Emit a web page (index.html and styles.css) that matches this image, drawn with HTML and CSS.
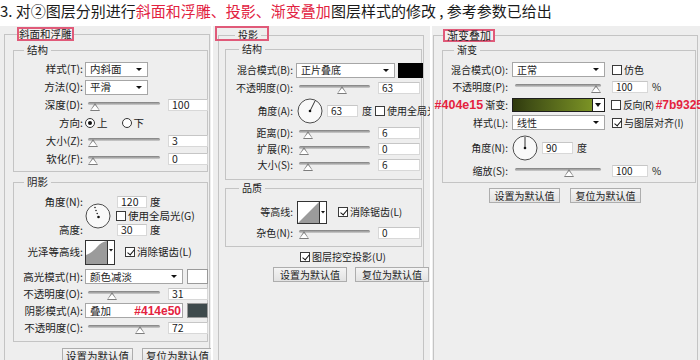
FILE: index.html
```html
<!DOCTYPE html>
<html lang="zh-CN">

<head>
    <meta charset="UTF-8">
    <title>图层样式参数</title>
    <link rel="stylesheet" href="styles.css">
</head>

<body>
    <div class="page">
        <div class="headline">3. 对②图层分别进行<span class="hl">斜面和浮雕、投影、渐变叠加</span>图层样式的修改 , 参考参数已给出</div>

        <div class="panels">
            <!-- 斜面和浮雕 -->
            <div class="panel p-bevel">
                <fieldset class="frame">
                    <legend class="mark">斜面和浮雕</legend>
                    <fieldset class="group g-struct">
                        <legend>结构</legend>
                        <div class="row"><span class="lbl">样式(T):</span><span class="select sm">内斜面</span></div>
                        <div class="row"><span class="lbl">方法(Q):</span><span class="select sm">平滑</span></div>
                        <div class="row">
                            <span class="lbl">深度(D):</span>
                            <span class="slider"><i class="track"></i><span class="rail"><i class="thumb" style="left:4%"></i></span></span>
                            <span class="val">100</span>
                        </div>
                        <div class="row">
                            <span class="lbl">方向:</span>
                            <span class="radio on"></span><span class="opt">上</span>
                            <span class="radio"></span><span>下</span>
                        </div>
                        <div class="row">
                            <span class="lbl">大小(Z):</span>
                            <span class="slider"><i class="track"></i><span class="rail"><i class="thumb" style="left:0%"></i></span></span>
                            <span class="val">3</span>
                        </div>
                        <div class="row">
                            <span class="lbl">软化(F):</span>
                            <span class="slider"><i class="track"></i><span class="rail"><i class="thumb" style="left:0%"></i></span></span>
                            <span class="val">0</span>
                        </div>
                    </fieldset>

                    <fieldset class="group g-shade">
                        <legend>阴影</legend>
                        <div class="angle-grid">
                            <span class="lbl top">角度(N):</span>
                            <svg class="dial" width="26" height="26" viewBox="0 0 26 26">
                                <circle cx="13" cy="13" r="12" fill="#f9f9f9" stroke="#4d4d4d" />
                                <g fill="#222">
                                    <circle cx="10" cy="4.5" r=".8" />
                                    <circle cx="11" cy="7.5" r=".8" />
                                    <circle cx="12.2" cy="10.5" r=".8" />
                                </g>
                                <circle cx="13.5" cy="14" r="1.3" fill="#111" />
                            </svg>
                            <div class="sub r1"><span class="val short">120</span><span class="unit">度</span></div>
                            <div class="sub r2"><span class="chk"></span>使用全局光(G)</div>
                            <span class="lbl bottom">高度:</span>
                            <div class="sub r3"><span class="val short">30</span><span class="unit">度</span></div>
                        </div>
                        <div class="row contour-row">
                            <span class="lbl">光泽等高线:</span>
                            <svg class="contour" width="30" height="25" viewBox="0 0 30 25">
                                <rect x=".5" y=".5" width="29" height="24" fill="#fff" stroke="#333" />
                                <path d="M1 24V15Q8 12 12 7T22 1V24Z" fill="#9b9b9b" />
                                <path d="M22.5 .5V24.5" stroke="#333" />
                                <path d="M24 9h4l-2 2.5z" fill="#111" />
                            </svg>
                            <span class="chk on"></span>消除锯齿(L)
                        </div>
                        <div class="row first"><span class="lbl">高光模式(H):</span><span class="select lg">颜色减淡</span><span class="swatch white"></span></div>
                        <div class="row">
                            <span class="lbl">不透明度(O):</span>
                            <span class="slider"><i class="track"></i><span class="rail"><i class="thumb" style="left:31%"></i></span></span>
                            <span class="val">31</span>
                        </div>
                        <div class="row">
                            <span class="lbl">阴影模式(A):</span>
                            <span class="select lg bare">叠加<span class="note">#414e50</span></span>
                            <span class="swatch dark"></span>
                        </div>
                        <div class="row">
                            <span class="lbl">不透明度(C):</span>
                            <span class="slider"><i class="track"></i><span class="rail"><i class="thumb" style="left:76%"></i></span></span>
                            <span class="val">72</span>
                        </div>
                    </fieldset>

                    <div class="btns"><span class="btn">设置为默认值</span><span class="btn">复位为默认值</span></div>
                </fieldset>
            </div>

            <!-- 投影 -->
            <div class="panel p-shadow">
                <span class="mark-over"></span>
                <fieldset class="frame">
                    <legend>投影</legend>
                    <fieldset class="group g-struct">
                        <legend>结构</legend>
                        <div class="row"><span class="lbl">混合模式(B):</span><span class="select">正片叠底</span><span class="swatch black"></span></div>
                        <div class="row">
                            <span class="lbl">不透明度(O):</span>
                            <span class="slider"><i class="track"></i><span class="rail"><i class="thumb" style="left:63%"></i></span></span>
                            <span class="val">63</span>
                        </div>
                        <div class="row angle-row">
                            <span class="lbl">角度(A):</span>
                            <svg class="dial" width="26" height="26" viewBox="0 0 26 26">
                                <circle cx="13" cy="13" r="12" fill="#f9f9f9" stroke="#4d4d4d" />
                                <path d="M13 13L18.2 2.6" stroke="#333" />
                                <circle cx="13" cy="13" r="1.3" fill="#111" />
                            </svg>
                            <span class="val short">63</span><span class="unit">度</span>
                            <span class="chk gl"></span>使用全局光(G)
                        </div>
                        <div class="row h17">
                            <span class="lbl">距离(D):</span>
                            <span class="slider"><i class="track"></i><span class="rail"><i class="thumb" style="left:7%"></i></span></span>
                            <span class="val">6</span>
                        </div>
                        <div class="row h16">
                            <span class="lbl">扩展(R):</span>
                            <span class="slider"><i class="track"></i><span class="rail"><i class="thumb" style="left:0%"></i></span></span>
                            <span class="val">0</span>
                        </div>
                        <div class="row h16">
                            <span class="lbl">大小(S):</span>
                            <span class="slider"><i class="track"></i><span class="rail"><i class="thumb" style="left:7%"></i></span></span>
                            <span class="val">6</span>
                        </div>
                    </fieldset>

                    <fieldset class="group g-quality">
                        <legend>品质</legend>
                        <div class="row contour-row">
                            <span class="lbl">等高线:</span>
                            <svg class="contour" width="30" height="23" viewBox="0 0 30 23">
                                <rect x=".5" y=".5" width="29" height="22" fill="#fff" stroke="#333" />
                                <path d="M1 22L22 1V22Z" fill="#9b9b9b" />
                                <path d="M22.5 .5V22.5" stroke="#333" />
                                <path d="M24 10h4l-2 2.5z" fill="#111" />
                            </svg>
                            <span class="chk on"></span>消除锯齿(L)
                        </div>
                        <div class="row h17">
                            <span class="lbl">杂色(N):</span>
                            <span class="slider"><i class="track"></i><span class="rail"><i class="thumb" style="left:0%"></i></span></span>
                            <span class="val">0</span>
                        </div>
                    </fieldset>

                    <div class="knock"><span class="chk on"></span>图层挖空投影(U)</div>
                    <div class="btns"><span class="btn">设置为默认值</span><span class="btn">复位为默认值</span></div>
                </fieldset>
            </div>

            <!-- 渐变叠加 -->
            <div class="panel p-grad">
                <fieldset class="frame">
                    <legend class="mark">渐变叠加</legend>
                    <fieldset class="group g-struct">
                        <legend>渐变</legend>
                        <div class="row h17"><span class="lbl">混合模式(O):</span><span class="select">正常</span><span class="chk"></span>仿色</div>
                        <div class="row">
                            <span class="lbl">不透明度(P):</span>
                            <span class="slider"><i class="track"></i><span class="rail"><i class="thumb" style="left:100%"></i></span></span>
                            <span class="val">100</span><span class="unit">%</span>
                        </div>
                        <div class="row">
                            <span class="lbl wide"><span class="note before">#404e15</span>渐变:</span>
                            <span class="grad-bar"><span class="grad-fill"></span><span class="grad-btn"></span></span>
                            <span class="chk rev"></span><span class="tight">反向(R)</span><span class="note after">#7b9325</span>
                        </div>
                        <div class="row h17"><span class="lbl">样式(L):</span><span class="select">线性</span><span class="chk on"></span>与图层对齐(I)</div>
                        <div class="row angle-row">
                            <span class="lbl">角度(N):</span>
                            <svg class="dial" width="26" height="26" viewBox="0 0 26 26">
                                <circle cx="13" cy="13" r="12" fill="#f9f9f9" stroke="#4d4d4d" />
                                <path d="M13 13V2" stroke="#333" />
                                <circle cx="13" cy="13" r="1.3" fill="#111" />
                            </svg>
                            <span class="val short">90</span><span class="unit">度</span>
                        </div>
                        <div class="row">
                            <span class="lbl">缩放(S):</span>
                            <span class="slider"><i class="track"></i><span class="rail"><i class="thumb" style="left:64%"></i></span></span>
                            <span class="val">100</span><span class="unit">%</span>
                        </div>
                    </fieldset>

                    <div class="btns"><span class="btn">设置为默认值</span><span class="btn">复位为默认值</span></div>
                </fieldset>
            </div>
        </div>
    </div>
</body>

</html>
```

FILE: styles.css
```css
* {
    box-sizing: border-box;
}

body {
    margin: 0;
    background: #fff;
    font-family: "Noto Sans CJK SC", "Liberation Sans", sans-serif;
    color: #1c1c1c;
}

.page {
    width: 700px;
    height: 360px;
    overflow: hidden;
}

.headline {
    height: 26px;
    line-height: 22px;
    font-size: 15px;
    white-space: nowrap;
    color: #1a1a1a;
}

.headline .hl {
    color: #e2223f;
}

.panels {
    display: flex;
    align-items: flex-start;
}

.panel {
    flex: none;
    position: relative;
    height: 334px;
    background: #eeeeee;
    overflow: hidden;
    font-size: 10px;
    line-height: 12px;
    white-space: nowrap;
}

.p-bevel {
    width: 211px;
    font-size: 10.5px;
}

.p-shadow {
    width: 217px;
    margin-left: 2px;
}

.p-grad {
    width: 268px;
    margin-left: 2px;
    overflow: visible;
}

/* group boxes */
fieldset {
    margin: 0;
    padding: 0;
    min-width: 0;
    border: 1px solid #c4c4c4;
}

legend {
    padding: 0 3px;
    line-height: 12px;
}

.mark {
    border: 2px solid #e05a79;
    background: #f4efef;
    line-height: 10px;
    padding: 0;
}

.mark-over {
    position: absolute;
    left: 2px;
    top: 0;
    width: 54px;
    height: 15px;
    border: 2px solid #e05a79;
    z-index: 1;
}

.frame {
    height: 360px;
}

.p-bevel .frame {
    margin: 1px 1px 0 4px;
    padding: 3px 1px 0 8px;
}

.p-bevel .frame > legend {
    margin-left: 4px;
}

.p-shadow .frame {
    margin: 3px 6px 0 5px;
    padding: 2px 1px 0 6px;
}

.p-shadow .frame > legend {
    margin-left: 10px;
}

.p-grad .frame {
    margin: 3px 2px 0 1px;
    padding: 2px 1px 0 8px;
}

.p-grad .frame > legend {
    margin-left: 1px;
    padding: 0 2px;
    font-size: 11px;
    line-height: 9px;
}

.group > legend {
    margin-left: 10px;
}

.p-shadow .group > legend {
    margin-left: 13px;
}

.p-grad .group > legend {
    margin-left: 11px;
}

.p-bevel .g-struct {
    padding: 4px 0 3px;
}

.p-bevel .g-shade {
    margin-top: 4px;
    padding: 7px 0 5px;
}

.p-shadow .g-struct {
    padding: 6px 0 6px;
}

.p-shadow .g-quality {
    margin-top: 2px;
    padding: 6px 0 5px;
}

.p-grad .g-struct {
    padding: 5px 0 2px;
}

/* rows */
.row {
    display: flex;
    align-items: center;
    height: 18px;
}

.row.h17 {
    height: 17px;
}

.row.h16 {
    height: 16px;
}

.lbl {
    flex: none;
    text-align: right;
    margin-right: 2px;
}

.p-bevel .lbl {
    width: 69px;
}

.p-shadow .lbl {
    width: 67px;
    margin-right: 3px;
}

.p-grad .lbl {
    width: 65px;
    margin-right: 4px;
}

.p-grad .lbl.wide {
    width: 78px;
    margin-left: -13px;
}

.p-bevel .g-shade .row {
    height: 17px;
}

.p-bevel .g-shade .row.first {
    margin-top: 3px;
}

.p-bevel .contour-row {
    margin-top: 2px;
    height: 26px !important;
}

.p-shadow .contour-row {
    height: 24px;
}

.angle-row {
    height: 27px;
}

.p-grad .angle-row {
    margin-top: 3px;
    height: 28px;
}

/* controls */
.select {
    flex: none;
    position: relative;
    display: flex;
    align-items: center;
    height: 15px;
    padding-left: 4px;
    background: #fff;
    border: 1px solid #a6a6a6;
}

.select::after {
    content: "";
    position: absolute;
    right: 5px;
    top: 5px;
    border-style: solid;
    border-width: 3px 3px 0;
    border-color: #111 transparent transparent;
}

.select.bare::after {
    display: none;
}

.p-bevel .select.sm {
    width: 63px;
}

.p-bevel .select.lg {
    width: 98px;
}

.p-shadow .select {
    width: 99px;
}

.p-grad .select {
    width: 93px;
}

.swatch {
    flex: none;
    height: 15px;
    border: 1px solid #9a9a9a;
}

.p-bevel .swatch {
    width: 21px;
    margin-left: 4px;
}

.p-shadow .swatch {
    width: 25px;
    margin-left: 3px;
}

.swatch.white {
    background: #fff;
}

.swatch.dark {
    background: #3e4a4c;
}

.swatch.black {
    background: #000;
    border-color: #000;
}

.slider {
    flex: none;
    position: relative;
    height: 14px;
}

.p-bevel .slider {
    width: 78px;
}

.p-shadow .slider {
    width: 77px;
}

.p-grad .slider {
    width: 92px;
}

.track {
    position: absolute;
    left: 3px;
    right: 3px;
    top: 4px;
    height: 3px;
    border-radius: 2px;
    background: linear-gradient(#7d7d7d, #cfcfcf);
}

.rail {
    position: absolute;
    left: 3px;
    right: 13px;
    top: 5px;
    height: 8px;
}

.thumb {
    position: absolute;
    top: 0;
    width: 0;
    height: 0;
    border-style: solid;
    border-width: 0 5px 8px;
    border-color: transparent transparent #7d7d7d;
}

.thumb::after {
    content: "";
    position: absolute;
    left: -4px;
    top: 2px;
    border-style: solid;
    border-width: 0 4px 5px;
    border-color: transparent transparent #fff;
}

.val {
    flex: none;
    height: 12px;
    line-height: 10px;
    padding-left: 3px;
    background: #fff;
    border: 1px solid #d8d8d8;
    border-top-color: #c6c6c6;
}

.p-bevel .val {
    width: 40px;
    margin-left: 5px;
}

.p-shadow .val {
    width: 42px;
    margin-left: 5px;
}

.p-grad .val {
    width: 36px;
    margin-left: 8px;
}

.val.short {
    width: 31px !important;
    margin-left: 4px !important;
}

.p-bevel .val.short {
    width: 30px !important;
    margin-left: 0 !important;
}

.unit {
    margin-left: 4px;
}

.p-bevel .unit {
    margin-left: 3px;
}

.dial {
    flex: none;
    display: block;
}

.p-shadow .angle-row .dial {
    margin-left: 1px;
}

.contour {
    flex: none;
    display: block;
    margin-right: 10px;
}

.p-shadow .contour {
    margin-left: 1px;
    margin-right: 11px;
}

.chk {
    flex: none;
    position: relative;
    width: 10px;
    height: 10px;
    margin-right: 2px;
    border: 1px solid #3a3a3a;
    background: #fff;
}

.chk.on::after {
    content: "";
    position: absolute;
    left: 2.5px;
    top: 0;
    width: 3px;
    height: 6px;
    border: solid #111;
    border-width: 0 1.5px 1.5px 0;
    transform: rotate(40deg);
}

.p-grad .chk {
    margin-left: 7px;
}

.p-grad .chk.rev {
    margin-left: 6px;
}

.tight {
    letter-spacing: -0.5px;
}

.chk.gl {
    margin-left: 3px;
}

.radio {
    flex: none;
    position: relative;
    width: 10px;
    height: 10px;
    margin-right: 2px;
    border: 1px solid #333;
    border-radius: 50%;
    background: #fff;
}

.radio.on::after {
    content: "";
    position: absolute;
    left: 2px;
    top: 2px;
    width: 4px;
    height: 4px;
    border-radius: 50%;
    background: #111;
}

.opt {
    margin-right: 14px;
}

/* angle block of the bevel shading */
.angle-grid {
    display: grid;
    grid-template-columns: 71px 32px 1fr;
    grid-template-rows: repeat(3, 14px);
    align-items: center;
    height: 42px;
}

.angle-grid .top {
    grid-column: 1;
    grid-row: 1;
}

.angle-grid .bottom {
    grid-column: 1;
    grid-row: 3;
}

.angle-grid .dial {
    grid-column: 2;
    grid-row: 1 / 4;
}

.sub {
    grid-column: 3;
    display: flex;
    align-items: center;
}

.sub.r1 {
    grid-row: 1;
}

.sub.r2 {
    grid-row: 2;
    margin-left: -1px;
}

.sub.r3 {
    grid-row: 3;
}

/* gradient picker */
.grad-bar {
    flex: none;
    display: flex;
    width: 93px;
    height: 14px;
    border: 1px solid #1e1e1e;
}

.grad-fill {
    flex: 1;
    background: linear-gradient(90deg, #2f390d, #404e15 20%, #7b9325);
}

.grad-btn {
    position: relative;
    width: 12px;
    background: #fff;
    border-left: 1px solid #1e1e1e;
}

.grad-btn::after {
    content: "";
    position: absolute;
    left: 2px;
    top: 4px;
    border-style: solid;
    border-width: 4px 3.5px 0;
    border-color: #111 transparent transparent;
}

/* red annotations */
.note {
    font-family: "Liberation Sans", sans-serif;
    font-weight: bold;
    font-size: 12px;
    color: #e4223e;
}

.select .note {
    margin-left: auto;
    margin-right: 1px;
}

.p-grad .note {
    font-size: 12.5px;
}

.p-grad .note.before {
    margin-right: 2px;
}

.p-grad .note.after {
    margin-left: 2px;
    font-size: 12px;
}

.knock {
    display: flex;
    align-items: center;
    height: 14px;
    margin-top: 3px;
    padding-left: 75px;
}

/* buttons */
.btns {
    display: flex;
    margin-top: 6px;
}

.btn {
    flex: none;
    height: 15px;
    line-height: 13px;
    text-align: center;
    border: 1px solid #adadad;
    background: linear-gradient(#f4f4f4, #e2e2e2);
}

.p-bevel .btns {
    padding-left: 49px;
    gap: 9px;
}

.p-bevel .btn {
    width: 71px;
}

.p-shadow .btns {
    margin-top: 3px;
    padding-left: 48px;
    gap: 8px;
}

.p-shadow .btn {
    width: 74px;
}

.p-grad .btns {
    margin-top: 5px;
    padding-left: 47px;
    gap: 10px;
}

.p-grad .btn {
    width: 71px;
}
```
